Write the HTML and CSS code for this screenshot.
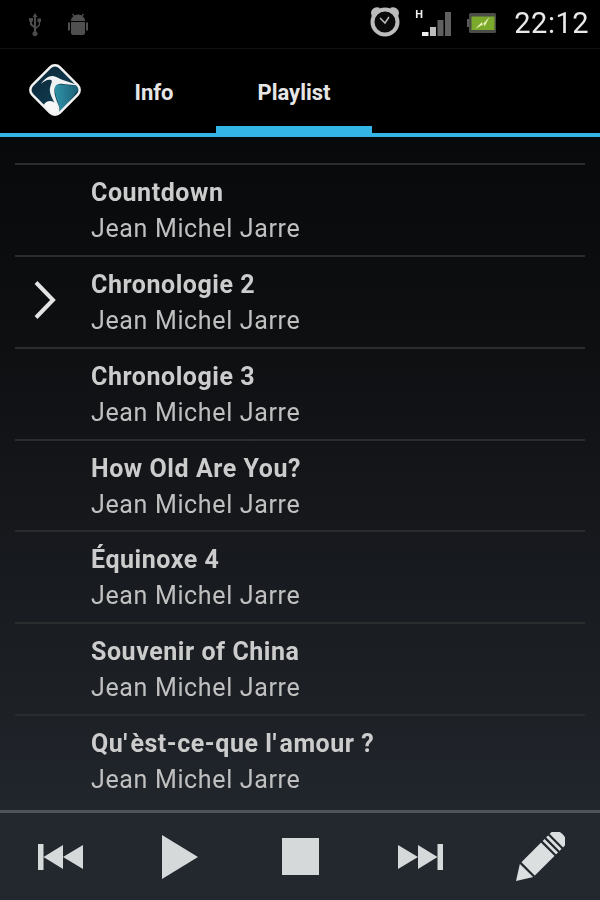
FILE: index.html
```html
<!DOCTYPE html>
<html lang="en">
<head>
<meta charset="utf-8">
<title>Playlist</title>
<link rel="stylesheet" href="styles.css">
</head>
<body>
<div class="app">
  <header class="status">
    <div class="status-left">
      <svg class="ic-usb" width="16" height="26" viewBox="0 0 16 26"><path d="M8 1l2.500 4H9v14.200a2.600 2.600 0 1 1-2 0V16l-4-3V9.500H2V6h4v3.500H5V12l2 1.500V5H5.500zM9 15l2.800-2.200V10H10.500V6.500H14V10h-1v3.600L9 17z" fill="#4c4c4c"/></svg>
      <svg class="ic-android" width="20" height="24" viewBox="0 0 20 24"><path d="M3 8a7 6.500 0 0 1 14 0zM3 9h14v11a2 2 0 0 1-2 2H5a2 2 0 0 1-2-2zM0 9.500h2v8H0zM18 9.500h2v8h-2z" fill="#4f4f4f"/><path d="M4.500 1L7 4M15.500 1L13 4" stroke="#4f4f4f" stroke-width="1.200"/></svg>
    </div>
    <div class="status-right">
      <svg class="ic-alarm" width="32" height="32" viewBox="0 0 32 32"><path d="M2 8a6 6 0 0 1 9-5L3 12zM30 8a6 6 0 0 0-9-5l8 9z" fill="#bcbcbc"/><circle cx="16" cy="17" r="12.500" fill="#0a0a0a" stroke="#bcbcbc" stroke-width="4"/><path d="M11 13l5 5 4-6" fill="none" stroke="#bcbcbc" stroke-width="1.500"/></svg>
      <div class="signal">
        <span class="net">H</span>
        <svg width="30" height="26" viewBox="0 0 30 26"><rect x="0" y="22" width="6.500" height="4" fill="#eee"/><rect x="8" y="17" width="6" height="9" fill="#bdbdbd"/><rect x="15.500" y="10" width="6" height="16" fill="#606060"/><rect x="23" y="2" width="6" height="24" fill="#606060"/></svg>
      </div>
      <svg class="ic-batt" width="29" height="20" viewBox="0 0 29 20"><rect x="0" y="6" width="2.500" height="8" fill="#5a5a5a"/><rect x="2" y="0" width="27" height="20" rx="1.500" fill="#4a4d46"/><rect x="4.500" y="3.500" width="23" height="13.500" fill="#7aa92c"/><path d="M8 16l7-7 .5 2.500 7-7.500-5 9.500-.5-2.500z" fill="#e6f4b4"/></svg>
      <span class="clock">22:12</span>
    </div>
  </header>

  <nav class="tabs">
    <svg class="logo" width="60" height="60" viewBox="0 0 60 60">
      <defs>
        <linearGradient id="lg" x1="0" y1="0" x2="1" y2="0"><stop offset="0" stop-color="#0c2c3e"/><stop offset="1" stop-color="#133f54"/></linearGradient>
        <linearGradient id="lt" x1="0" y1="0" x2="1" y2="0"><stop offset="0" stop-color="#2f93a8"/><stop offset="1" stop-color="#1a5a70"/></linearGradient>
        <clipPath id="dm"><rect x="10.500" y="10.500" width="39" height="39" rx="7" transform="rotate(45 30 30)"/></clipPath>
      </defs>
      <rect x="10.500" y="10.500" width="39" height="39" rx="7" transform="rotate(45 30 30)" fill="url(#lg)"/>
      <g clip-path="url(#dm)">
        <path d="M30 24L56 26 35 54C36 44 28 36 30 24z" fill="url(#lt)"/>
        <path d="M16 24C19 19 24 15.500 28 16c4 .5 6 3 10 4l16 5.500-16-1.500c-4-.5-7 0-8 3-2 5 1 12 3 17 2 4 2 8 0 12l-11-4c5-2 8-5 7-10-2-5-5-9-4-14 1-5 3-7 1-8-3-1-7 1-10 4z" fill="#eef2f3"/>
        <circle cx="25" cy="48" r="7" fill="#f8f8f8"/>
      </g>
      <rect x="10.500" y="10.500" width="39" height="39" rx="7" transform="rotate(45 30 30)" fill="none" stroke="#f2f2f2" stroke-width="2.500"/>
    </svg>
    <div class="tab tab-info">Info</div>
    <div class="tab tab-active">Playlist</div>
  </nav>

  <main class="list">
    <div class="row-cut"></div>
    <div class="row"><div class="text"><div class="title">Countdown</div><div class="artist">Jean Michel Jarre</div></div></div>
    <div class="row">
      <svg class="chevron" width="24" height="40" viewBox="0 0 24 40"><path d="M3 2.500l17 17.500L3 37.500" fill="none" stroke="#e4e4e4" stroke-width="4"/></svg>
      <div class="text"><div class="title">Chronologie 2</div><div class="artist">Jean Michel Jarre</div></div>
    </div>
    <div class="row"><div class="text"><div class="title">Chronologie 3</div><div class="artist">Jean Michel Jarre</div></div></div>
    <div class="row"><div class="text"><div class="title">How Old Are You?</div><div class="artist">Jean Michel Jarre</div></div></div>
    <div class="row"><div class="text"><div class="title">Équinoxe 4</div><div class="artist">Jean Michel Jarre</div></div></div>
    <div class="row"><div class="text"><div class="title">Souvenir of China</div><div class="artist">Jean Michel Jarre</div></div></div>
    <div class="row"><div class="text"><div class="title">Qu<span class="apos">'</span>èst-ce-que l<span class="apos">'</span>amour ?</div><div class="artist">Jean Michel Jarre</div></div></div>
  </main>

  <footer class="player">
    <svg width="45" height="26" viewBox="0 0 45 26"><path d="M0 0h5.500v26H0zM5.500 13L25 1v24zM25 13L45 1v24z" fill="#d6d9da"/></svg>
    <svg width="36" height="44" viewBox="0 0 36 44"><path d="M0 0l36 22L0 44z" fill="#d6d9da"/></svg>
    <svg width="37" height="37" viewBox="0 0 37 37"><rect width="37" height="37" fill="#d6d9da"/></svg>
    <svg width="45" height="26" viewBox="0 0 45 26"><path d="M45 0h-5.500v26H45zM39.500 13L20 1v24zM20 13L0 1v24z" fill="#d6d9da"/></svg>
    <svg width="50" height="50" viewBox="0 0 50 50"><g transform="translate(1 49) rotate(-45)"><path d="M0 0L15-9.500H58Q66-9.500 66 0T58 9.500H15z" fill="#dcdfe0"/><path d="M16-10V10M46-10V10M51-10V10M56-10V10" stroke="#23282e" stroke-width="2.200" fill="none"/></g></svg>
  </footer>
</div>
</body>
</html>
```

FILE: styles.css
```css
* { box-sizing: border-box; }
html, body { margin: 0; padding: 0; background: #000; }
.app {
  width: 600px;
  height: 900px;
  display: flex;
  flex-direction: column;
  overflow: hidden;
  font-family: Roboto, "Liberation Sans", sans-serif;
  filter: blur(0.55px);
}
.status {
  height: 49px;
  flex: none;
  background: #000;
  border-bottom: 1px solid #101010;
  display: flex;
  justify-content: space-between;
  align-items: flex-start;
}
.status-left { display: flex; align-items: center; gap: 25px; padding: 12px 0 0 27px; }
.status-right { display: flex; align-items: flex-start; padding-right: 11px; }
.ic-alarm { margin: 5px 13px 0 0; }
.signal { position: relative; width: 38px; height: 26px; margin: 10px 15px 0 0; display: flex; justify-content: flex-end; }
.net { position: absolute; left: 1px; top: 0; font-size: 11px; font-weight: 700; color: #eee; line-height: 10px; }
.ic-batt { margin: 13px 18px 0 0; }
.clock { font-size: 29px; color: #e8e8e8; letter-spacing: .5px; line-height: 32px; margin-top: 7px; }

.tabs {
  height: 88px;
  flex: none;
  display: flex;
  background: #000;
  border-bottom: 4px solid #33b5e5;
  position: relative;
}
.logo { position: absolute; left: 25px; top: 11px; }
.tab {
  font-size: 22px;
  font-weight: 700;
  color: #e6e6e6;
  display: flex;
  justify-content: center;
  padding-top: 31px;
  line-height: 26px;
}
.tab-info { margin-left: 92px; width: 124px; }
.tab-active { width: 156px; box-shadow: inset 0 -7px 0 #33b5e5; }

.list {
  flex: 1;
  min-height: 0;
  padding: 0 15px;
  background: linear-gradient(#08090a 0%, #0e0f11 30%, #15171b 55%, #21262c 100%);
  display: flex;
  flex-direction: column;
  border-bottom: 3px solid #4f5458;
}
.row {
  height: 91.85px;
  flex: none;
  border-top: 2px solid #2a2c2e;
  display: flex;
  align-items: flex-start;
  position: relative;
  padding: 10px 0 0 76px;
}
.row-cut { height: 26px; flex: none; }
.chevron { position: absolute; left: 18px; top: 23px; }
.text { display: flex; flex-direction: column; }
.title { font-size: 25px; font-weight: 700; color: #cccccc; line-height: 36px; letter-spacing: .55px; }
.artist { font-size: 25px; color: #c0c0c0; line-height: 36px; letter-spacing: .65px; }
.apos { letter-spacing: 3px; }

.player {
  flex: none;
  height: 87px;
  background: #23282e;
  display: grid;
  grid-template-columns: repeat(5, 120px);
  justify-items: center;
  align-items: center;
}
```
